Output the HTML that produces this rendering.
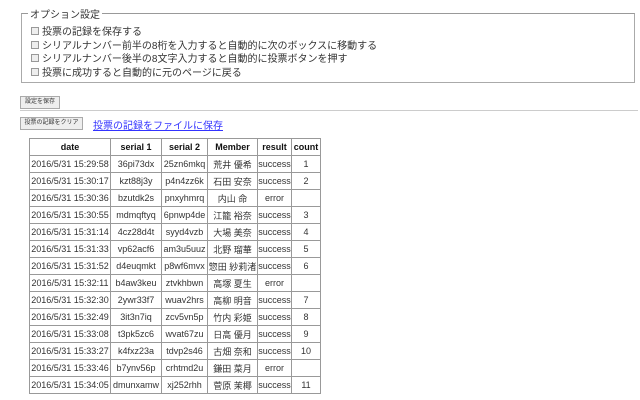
<!DOCTYPE html>
<html><head><meta charset="utf-8"><style>
body{margin:0;width:640px;height:400px;background:#fff;font-family:"Liberation Sans","Noto Sans CJK JP",sans-serif;color:#222;position:relative;overflow:hidden}
.fs{position:absolute;left:21px;top:13px;width:614px;height:70px;border:1px solid #aaa;border-top-color:#999;box-sizing:border-box}
.lg{position:absolute;left:28px;top:6px;background:#fff;padding:0 2px;font-size:10px;color:#333}
.op{position:absolute;left:31px;font-size:10px;color:#333;white-space:nowrap}
.op i{display:inline-block;width:6px;height:6px;border:1px solid #999;background:#eee;margin-right:3px;vertical-align:0}
.btn{position:absolute;height:11px;border:1px solid #aaa;background:#eee;font-size:6px;line-height:11px;text-align:center;color:#333}
.hr{position:absolute;left:20px;top:110px;width:618px;height:1px;background:#ccc}
a{position:absolute;left:93px;top:117px;font-size:10px;color:#33f;text-decoration:underline}
table{position:absolute;left:29px;top:138px;border-collapse:collapse;font-size:9px;color:#333;table-layout:fixed;width:291px}
td,th{border:1px solid #999;height:16px;padding:0;text-align:center;white-space:nowrap;overflow:hidden}
th{font-weight:bold;color:#111}
</style></head><body>
<div class="fs"></div><div class="lg">オプション設定</div>
<div class="op" style="top:23px"><i></i>投票の記録を保存する</div>
<div class="op" style="top:37px"><i></i>シリアルナンバー前半の8桁を入力すると自動的に次のボックスに移動する</div>
<div class="op" style="top:50px"><i></i>シリアルナンバー後半の8文字入力すると自動的に投票ボタンを押す</div>
<div class="op" style="top:64px"><i></i>投票に成功すると自動的に元のページに戻る</div>
<div class="btn" style="left:20px;top:96px;width:38px">設定を保存</div>
<div class="hr"></div>
<div class="btn" style="left:20px;top:117px;width:61px">投票の記録をクリア</div>
<a>投票の記録をファイルに保存</a>
<table>
<colgroup><col style="width:81px"><col style="width:51px"><col style="width:46px"><col style="width:50px"><col style="width:34px"><col style="width:29px"></colgroup>
<tr><th>date</th><th>serial 1</th><th>serial 2</th><th>Member</th><th>result</th><th>count</th></tr>
<tr><td>2016/5/31 15:29:58</td><td>36pi73dx</td><td>25zn6mkq</td><td>荒井 優希</td><td>success</td><td>1</td></tr>
<tr><td>2016/5/31 15:30:17</td><td>kzt88j3y</td><td>p4n4zz6k</td><td>石田 安奈</td><td>success</td><td>2</td></tr>
<tr><td>2016/5/31 15:30:36</td><td>bzutdk2s</td><td>pnxyhmrq</td><td>内山 命</td><td>error</td><td></td></tr>
<tr><td>2016/5/31 15:30:55</td><td>mdmqftyq</td><td>6pnwp4de</td><td>江籠 裕奈</td><td>success</td><td>3</td></tr>
<tr><td>2016/5/31 15:31:14</td><td>4cz28d4t</td><td>syyd4vzb</td><td>大場 美奈</td><td>success</td><td>4</td></tr>
<tr><td>2016/5/31 15:31:33</td><td>vp62acf6</td><td>am3u5uuz</td><td>北野 瑠華</td><td>success</td><td>5</td></tr>
<tr><td>2016/5/31 15:31:52</td><td>d4euqmkt</td><td>p8wf6mvx</td><td>惣田 紗莉渚</td><td>success</td><td>6</td></tr>
<tr><td>2016/5/31 15:32:11</td><td>b4aw3keu</td><td>ztvkhbwn</td><td>高塚 夏生</td><td>error</td><td></td></tr>
<tr><td>2016/5/31 15:32:30</td><td>2ywr33f7</td><td>wuav2hrs</td><td>高柳 明音</td><td>success</td><td>7</td></tr>
<tr><td>2016/5/31 15:32:49</td><td>3it3n7iq</td><td>zcv5vn5p</td><td>竹内 彩姫</td><td>success</td><td>8</td></tr>
<tr><td>2016/5/31 15:33:08</td><td>t3pk5zc6</td><td>wvat67zu</td><td>日高 優月</td><td>success</td><td>9</td></tr>
<tr><td>2016/5/31 15:33:27</td><td>k4fxz23a</td><td>tdvp2s46</td><td>古畑 奈和</td><td>success</td><td>10</td></tr>
<tr><td>2016/5/31 15:33:46</td><td>b7ynv56p</td><td>crhtmd2u</td><td>鎌田 菜月</td><td>error</td><td></td></tr>
<tr><td>2016/5/31 15:34:05</td><td>dmunxamw</td><td>xj252rhh</td><td>菅原 茉椰</td><td>success</td><td>11</td></tr>
</table>
</body></html>
